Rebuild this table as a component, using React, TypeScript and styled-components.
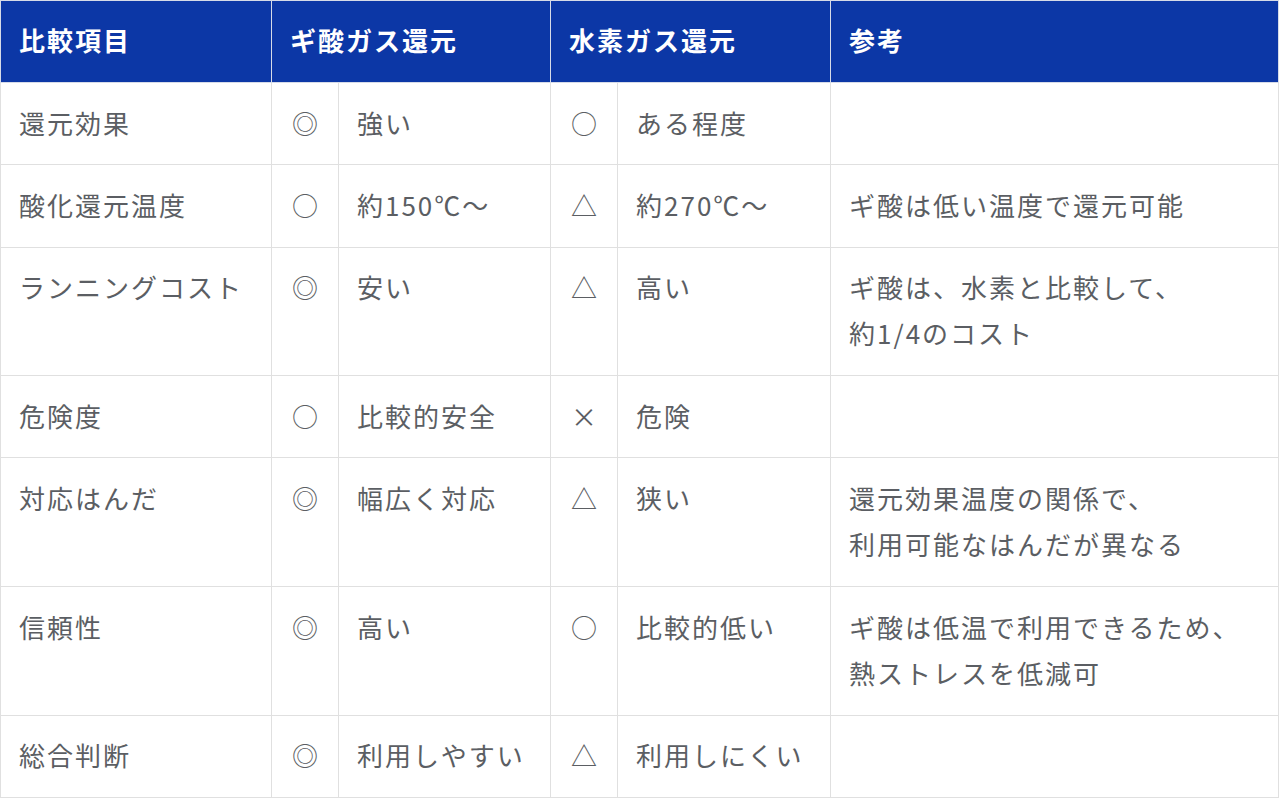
import styled, { createGlobalStyle } from "styled-components";

const GlobalStyle = createGlobalStyle`
  html, body {
    margin: 0;
    padding: 0;
    background: #ffffff;
  }
  body {
    font-family: "Noto Sans CJK JP", "Noto Sans", sans-serif;
  }
`;

const Table = styled.table`
  width: 1278px;
  border-collapse: collapse;
  table-layout: fixed;
  font-size: 26px;
  font-weight: 400;
  letter-spacing: 2px;
  line-height: 46.3px;
  color: #5b5e63;
`;

const Col = styled.col<{ $w: number }>`
  width: ${(p) => p.$w}px;
`;

const HeadCell = styled.th`
  background: #0c37a6;
  color: #ffffff;
  font-weight: 700;
  text-align: left;
  vertical-align: middle;
  height: 82px;
  padding: 0 18px 2px;
  border: 1px solid #d6dbe8;
  box-sizing: border-box;
`;

const Cell = styled.td<{ $mark?: boolean }>`
  vertical-align: top;
  padding: 16.5px ${(p) => (p.$mark ? "0" : "18px")} 18.5px;
  text-align: ${(p) => (p.$mark ? "center" : "left")};
  letter-spacing: ${(p) => (p.$mark ? "0" : "2px")};
  border: 1px solid #e0e0e0;
  white-space: pre-line;
`;

type Row = {
  item: string;
  formicMark: string;
  formic: string;
  hydrogenMark: string;
  hydrogen: string;
  note: string;
};

const widths = [271, 67, 212, 67, 213, 448];

const rows: Row[] = [
  { item: "還元効果", formicMark: "◎", formic: "強い", hydrogenMark: "○", hydrogen: "ある程度", note: "" },
  { item: "酸化還元温度", formicMark: "○", formic: "約150℃～", hydrogenMark: "△", hydrogen: "約270℃～", note: "ギ酸は低い温度で還元可能" },
  { item: "ランニングコスト", formicMark: "◎", formic: "安い", hydrogenMark: "△", hydrogen: "高い", note: "ギ酸は、水素と比較して、\n約1/4のコスト" },
  { item: "危険度", formicMark: "○", formic: "比較的安全", hydrogenMark: "×", hydrogen: "危険", note: "" },
  { item: "対応はんだ", formicMark: "◎", formic: "幅広く対応", hydrogenMark: "△", hydrogen: "狭い", note: "還元効果温度の関係で、\n利用可能なはんだが異なる" },
  { item: "信頼性", formicMark: "◎", formic: "高い", hydrogenMark: "○", hydrogen: "比較的低い", note: "ギ酸は低温で利用できるため、\n熱ストレスを低減可" },
  { item: "総合判断", formicMark: "◎", formic: "利用しやすい", hydrogenMark: "△", hydrogen: "利用しにくい", note: "" },
];

export default function App() {
  return (
    <>
      <GlobalStyle />
      <Table>
        <colgroup>
          {widths.map((w, i) => (
            <Col key={i} $w={w} />
          ))}
        </colgroup>
        <thead>
          <tr>
            <HeadCell>比較項目</HeadCell>
            <HeadCell colSpan={2}>ギ酸ガス還元</HeadCell>
            <HeadCell colSpan={2}>水素ガス還元</HeadCell>
            <HeadCell>参考</HeadCell>
          </tr>
        </thead>
        <tbody>
          {rows.map((r) => (
            <tr key={r.item}>
              <Cell>{r.item}</Cell>
              <Cell $mark>{r.formicMark}</Cell>
              <Cell>{r.formic}</Cell>
              <Cell $mark>{r.hydrogenMark}</Cell>
              <Cell>{r.hydrogen}</Cell>
              <Cell>{r.note}</Cell>
            </tr>
          ))}
        </tbody>
      </Table>
    </>
  );
}
